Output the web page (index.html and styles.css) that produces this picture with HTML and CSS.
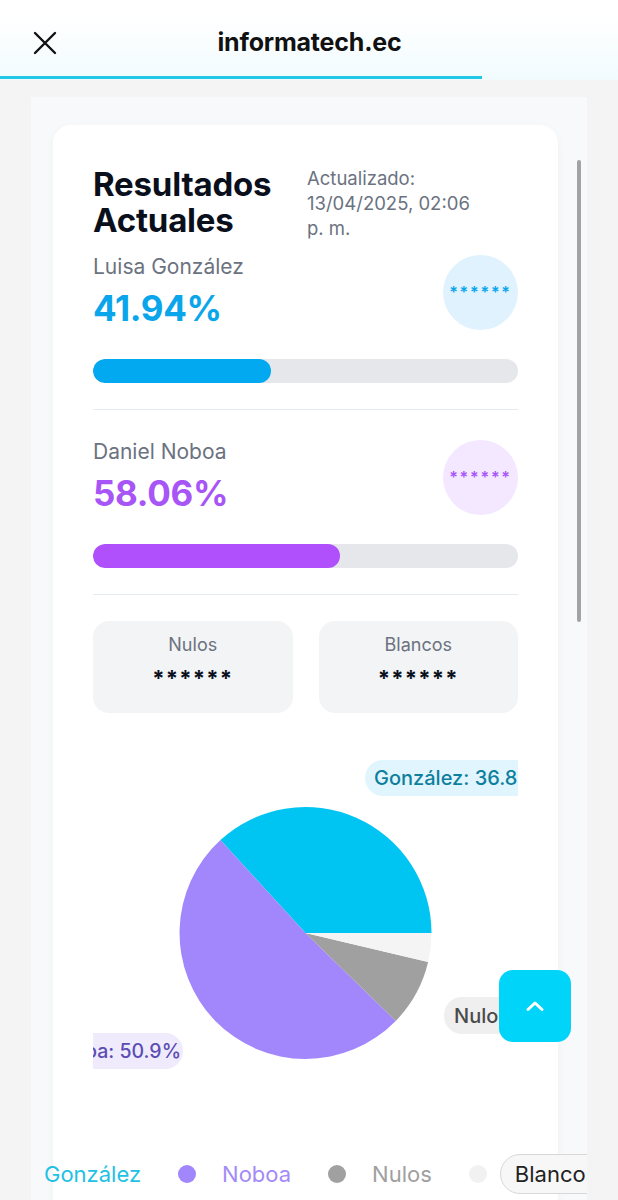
FILE: index.html
```html
<!DOCTYPE html>
<html lang="es">
<head>
  <meta charset="UTF-8" />
  <meta name="viewport" content="width=device-width, initial-scale=1.0"/>
  <title>informatech.ec</title>
  <link rel="stylesheet" href="styles.css">
</head>
<body>
  <header class="topbar">
    <div class="topbar-row">
      <button class="close-btn" aria-label="Cerrar">
        <svg width="24" height="24" viewBox="0 0 24 24"><path d="M2 2 L22 22 M22 2 L2 22" stroke="#111" stroke-width="2.4" stroke-linecap="round" fill="none"/></svg>
      </button>
      <div class="site-title">informatech.ec</div>
      <span></span>
    </div>
    <div class="load-bar"></div>
  </header>

  <main class="page">
    <div class="panel">
      <div class="card">
        <div class="card-head">
          <h2 class="card-title">Resultados Actuales</h2>
          <p class="updated">Actualizado: 13/04/2025, 02:06 p. m.</p>
        </div>

        <section class="candidate sky">
          <div class="cand-row">
            <div>
              <div class="cand-name">Luisa González</div>
              <div class="cand-pct">41.94%</div>
            </div>
            <div class="votes-badge">******</div>
          </div>
          <div class="bar"><div class="bar-fill" style="width:41.94%"></div></div>
        </section>

        <section class="candidate violet">
          <div class="cand-row">
            <div>
              <div class="cand-name">Daniel Noboa</div>
              <div class="cand-pct">58.06%</div>
            </div>
            <div class="votes-badge">******</div>
          </div>
          <div class="bar"><div class="bar-fill" style="width:58.06%"></div></div>
        </section>

        <div class="extra-votes">
          <div class="extra-box">
            <div class="extra-label">Nulos</div>
            <div class="extra-value">******</div>
          </div>
          <div class="extra-box">
            <div class="extra-label">Blancos</div>
            <div class="extra-value">******</div>
          </div>
        </div>

        <div class="chart">
          <svg width="425" height="384" viewBox="0 0 425 384">
            <path d="M212.5,192 L338.5,192 A126,126 0 0 0 127.41,99.07 Z" fill="#00c5f2"/>
            <path d="M212.5,192 L127.41,99.07 A126,126 0 1 0 302.72,279.96 Z" fill="#a187fb"/>
            <path d="M212.5,192 L302.72,279.96 A126,126 0 0 0 335.11,221.03 Z" fill="#a0a0a0"/>
            <path d="M212.5,192 L335.11,221.03 A126,126 0 0 0 338.5,192 Z" fill="#f4f4f5"/>

            <rect x="272" y="19" width="200" height="36" rx="18" fill="#e0f5fd"/>
            <text x="281" y="44" class="pie-label" fill="#0e7f9e" font-weight="600">González: 36.8%</text>

            <rect x="-120" y="292" width="210" height="36" rx="18" fill="#efebfd"/>
            <text x="88" y="317" class="pie-label small" fill="#5b4db3" text-anchor="end">Noboa: 50.9%</text>

            <rect x="351" y="256" width="160" height="37" rx="18" fill="#efeff0"/>
            <text x="361" y="282" class="pie-label" fill="#4a4a4a">Nulos: 8.6%</text>
          </svg>
        </div>

        <div class="legend">
          <div class="legend-item"><span class="dot" style="background:#00c5f2"></span><span style="color:#22c1e3">González</span></div>
          <div class="legend-item"><span class="dot" style="background:#a187fb"></span><span style="color:#a38af8">Noboa</span></div>
          <div class="legend-item"><span class="dot" style="background:#a0a0a0"></span><span style="color:#a0a0a0">Nulos</span></div>
          <div class="legend-item"><span class="dot" style="background:#f1f1f2"></span><span class="legend-pill">Blancos</span></div>
        </div>
      </div>
      <div class="scroll-thumb"></div>
    </div>

    <button class="to-top" aria-label="Subir">
      <svg width="20" height="12" viewBox="0 0 20 12"><path d="M3 9.5 L10 3 L17 9.5" stroke="#fff" stroke-width="3" stroke-linecap="round" stroke-linejoin="round" fill="none"/></svg>
    </button>
  </main>
</body>
</html>
```

FILE: styles.css
```css
body {
  font-family: 'Inter', 'Noto Sans', sans-serif;
  background: #f4f4f5;
  margin: 0;
  height: 1200px;
  overflow: hidden;
}

.topbar {
  background: linear-gradient(#ffffff 20%, #f1fbfe);
  height: 80px;
}

.topbar-row {
  height: 76px;
  display: grid;
  grid-template-columns: 1fr auto 1fr;
  align-items: center;
  padding: 0 32px 0 33px;
}

.close-btn {
  background: none;
  border: none;
  padding: 0;
  width: 24px;
  height: 24px;
  margin-top: 10px;
}

.site-title {
  font-size: 25px;
  font-weight: 700;
  color: #111;
  letter-spacing: -0.2px;
  margin-top: 8px;
}

.load-bar {
  width: 482px;
  height: 3px;
  background: #22c8e5;
}

.page {
  padding: 17px 0 0 31px;
}

.panel {
  position: relative;
  width: 556px;
  height: 1110px;
  background: #f8f9fa;
  padding: 28px 0 0 22px;
  box-sizing: border-box;
  overflow: hidden;
}

.card {
  width: 505px;
  min-height: 1200px;
  background: #fff;
  border-radius: 18px;
  box-shadow: 0 2px 8px rgba(0, 0, 0, 0.04);
  padding: 41px 40px 0;
  box-sizing: border-box;
}

.card-head {
  display: flex;
  gap: 32px;
}

.card-title {
  margin: 0;
  font-size: 33px;
  line-height: 36px;
  font-weight: 700;
  letter-spacing: -0.2px;
  color: #0a0f1c;
  width: 182px;
}

.updated {
  margin: 0;
  width: 178px;
  font-size: 18.5px;
  line-height: 25px;
  color: #6b7280;
}

.candidate {
  margin-top: 13px;
  padding-bottom: 26px;
  border-bottom: 1px solid #e2eaf2;
}

.candidate + .candidate {
  margin-top: 29px;
}

.cand-row {
  display: flex;
  justify-content: space-between;
  align-items: center;
}

.cand-name {
  font-size: 21px;
  line-height: 26px;
  color: #6b7280;
}

.cand-pct {
  margin-top: 6px;
  font-size: 35px;
  line-height: 44px;
  font-weight: 700;
  letter-spacing: -0.3px;
}

.votes-badge {
  width: 75px;
  height: 75px;
  border-radius: 50%;
  display: flex;
  align-items: center;
  justify-content: center;
  font-size: 16px;
  letter-spacing: 1.8px;
  font-weight: 600;
}

.bar {
  margin-top: 29px;
  height: 24px;
  border-radius: 12px;
  background: #e5e7eb;
  overflow: hidden;
}

.bar-fill {
  height: 100%;
  border-radius: 12px;
}

.sky .cand-pct, .sky .votes-badge { color: #0aa5ea; }
.sky .votes-badge { background: #e0f2fe; }
.sky .bar-fill { background: #03a9f0; }

.violet .cand-pct, .violet .votes-badge { color: #a855f7; }
.violet .votes-badge { background: #f3e8ff; }
.violet .bar-fill { background: #b050fd; }

.extra-votes {
  margin-top: 26px;
  display: grid;
  grid-template-columns: 1fr 1fr;
  gap: 26px;
}

.extra-box {
  height: 92px;
  background: #f3f4f6;
  border-radius: 16px;
  text-align: center;
  padding-top: 11px;
  box-sizing: border-box;
}

.extra-label {
  font-size: 18px;
  line-height: 26px;
  color: #6b7280;
}

.extra-value {
  margin-top: 6px;
  font-size: 22px;
  line-height: 28px;
  font-weight: 700;
  letter-spacing: 1.2px;
  color: #0a0f1c;
}

.chart {
  margin-top: 28px;
  height: 384px;
}

.chart svg {
  display: block;
  overflow: hidden;
}

.pie-label {
  font-family: 'Inter', sans-serif;
  font-size: 20px;
  font-weight: 500;
}

.pie-label.small {
  font-size: 19.5px;
}

.legend {
  margin: 29px 0 0 -93px;
  display: flex;
  align-items: center;
  gap: 37px;
  font-size: 22px;
  white-space: nowrap;
}

.legend-item {
  display: flex;
  align-items: center;
  gap: 26px;
  flex-shrink: 0;
}

.dot {
  width: 18px;
  height: 18px;
  border-radius: 50%;
}

.legend-pill {
  color: #222;
  background: #f7f7f7;
  border: 1.5px solid #d8d8d8;
  border-radius: 20px;
  padding: 6px 24px 6px 14px;
  margin-left: -13px;
}

.scroll-thumb {
  position: absolute;
  left: 546px;
  top: 63px;
  width: 4px;
  height: 462px;
  border-radius: 2px;
  background: #a3a3a3;
}

.to-top {
  position: fixed;
  left: 499px;
  top: 970px;
  width: 72px;
  height: 72px;
  border: none;
  border-radius: 14px;
  background: #00d4f8;
  display: flex;
  align-items: center;
  justify-content: center;
  padding: 0;
}
```
